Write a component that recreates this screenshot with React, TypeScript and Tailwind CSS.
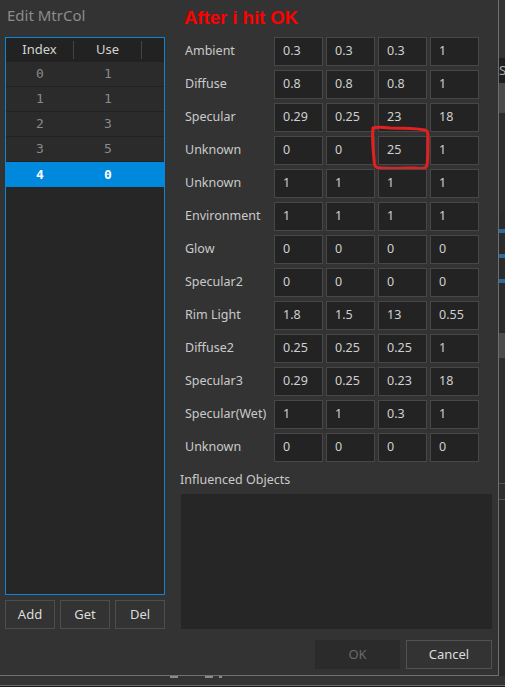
import React from 'react';

const ui = { fontFamily: '"Noto Sans", "Open Sans", sans-serif' };
const mono = { fontFamily: '"DejaVu Sans Mono", "Liberation Mono", monospace' };

const materialRows: [string, string[]][] = [
  ['Ambient', ['0.3', '0.3', '0.3', '1']],
  ['Diffuse', ['0.8', '0.8', '0.8', '1']],
  ['Specular', ['0.29', '0.25', '23', '18']],
  ['Unknown', ['0', '0', '25', '1']],
  ['Unknown', ['1', '1', '1', '1']],
  ['Environment', ['1', '1', '1', '1']],
  ['Glow', ['0', '0', '0', '0']],
  ['Specular2', ['0', '0', '0', '0']],
  ['Rim Light', ['1.8', '1.5', '13', '0.55']],
  ['Diffuse2', ['0.25', '0.25', '0.25', '1']],
  ['Specular3', ['0.29', '0.25', '0.23', '18']],
  ['Specular(Wet)', ['1', '1', '0.3', '1']],
  ['Unknown', ['0', '0', '0', '0']],
];

const colorSlots = [
  { index: '0', use: '1' },
  { index: '1', use: '1' },
  { index: '2', use: '3' },
  { index: '3', use: '5' },
  { index: '4', use: '0' },
];

function SlotList() {
  return (
    <div className="flex h-[558px] w-[160px] flex-col border border-[#0a86d9] bg-[#262626]">
      <div className="flex h-[24px] shrink-0 items-center bg-[#222222] text-[13px] text-[#d4d4d4]" style={ui}>
        <div className="flex h-[18px] w-[68px] items-center justify-center border-r border-[#444]">Index</div>
        <div className="flex h-[18px] w-[68px] items-center justify-center border-r border-[#444]">Use</div>
      </div>
      {colorSlots.map((s, i) => {
        const sel = i === colorSlots.length - 1;
        return (
          <div
            key={s.index}
            className={`flex h-[25px] shrink-0 items-center text-[13px] ${
              sel ? 'bg-[#0088dd] font-bold text-white' : 'border-b border-[#222] bg-[#2b2b2b] text-[#8a8a8a]'
            }`}
            style={mono}
          >
            <span className="w-[68px] text-center">{s.index}</span>
            <span className="w-[68px] text-center">{s.use}</span>
          </div>
        );
      })}
    </div>
  );
}

function ValueRow({ label, values, mark }: { label: string; values: string[]; mark?: boolean }) {
  return (
    <div className="flex h-[29px] items-center">
      <div className="w-[94px] pl-[5px] text-[12.5px] text-[#cacaca]">{label}</div>
      <div className="flex gap-[3px]">
        {values.map((v, i) => (
          <div
            key={i}
            className="relative flex h-[29px] w-[49px] items-center border border-[#474747] bg-[#232323] pl-[8px] text-[12.5px] text-[#d0d0d0]"
          >
            {v}
            {mark && i === 2 && (
              <svg className="absolute left-[-9px] top-[-12px]" width="62" height="47" viewBox="0 0 62 47" fill="none">
                <path
                  d="M3 3 C6 2 12 2 20 3 C32 3 44 3 55 5 C58 6 58 8 58 12 C58 22 58 32 57 40 C56 44 52 44 45 43 C34 43 20 44 10 43 C5 43 4 40 4 34 C3 24 2 12 3 3"
                  stroke="#e32020"
                  strokeWidth="3"
                  strokeLinecap="round"
                  strokeLinejoin="round"
                />
              </svg>
            )}
          </div>
        ))}
      </div>
    </div>
  );
}

function EdgeStrip() {
  // slice of the editor window that peeks out behind the dialog
  return (
    <div className="flex w-[6px] flex-col bg-[#333]">
      <div className="h-[58px]" />
      <div className="h-[25px] bg-[#1f1f1f] text-[13px] leading-[25px] text-[#aaa]" style={ui}>S</div>
      <div className="h-[30px] bg-[#4a4a4a]" />
      <div className="h-[100px] bg-[#2c2c2c]" />
      <div className="flex h-[120px] flex-col bg-[#2a2a2a]">
        <div className="mt-[16px] h-[4px] bg-[#2a6aa0]" />
        <div className="mt-[21px] h-[4px] bg-[#2a6aa0]" />
        <div className="mt-[21px] h-[4px] bg-[#2a6aa0]" />
      </div>
      <div className="h-[25px] bg-[#4b4b4b]" />
      <div className="h-[126px] border-b border-[#555] bg-[#2e2e2e]" />
      <div className="h-[16px] border-b border-[#555] bg-[#2e2e2e]" />
      <div className="flex-1 bg-[#2a2a2a]" />
    </div>
  );
}

export default function App() {
  return (
    <div className="flex h-[687px] w-[505px] flex-col overflow-hidden bg-[#333333]" style={ui}>
      <div className="flex h-[676px]">
        <div className="flex w-[499px] flex-col border-b border-r border-[#6f6f6f] bg-[#333333]">
          <div className="flex h-[37px] shrink-0">
            <div className="w-[184px] pl-[7px] pt-[4px] text-[15px] text-[#8c8c8c]">Edit MtrCol</div>
            <div
              className="pt-[5px] text-[18.5px] font-bold leading-[26px] text-[#ff0000]"
              style={{ fontFamily: '"Liberation Sans", Arial, sans-serif' }}
            >
              After i hit OK
            </div>
          </div>
          <div className="flex">
            <div className="ml-[5px] flex w-[160px] flex-col gap-[5px]">
              <SlotList />
              <div className="flex gap-[5px]">
                {['Add', 'Get', 'Del'].map((b) => (
                  <button
                    key={b}
                    className="h-[29px] w-[50px] border border-[#4d4d4d] bg-[#333] text-[13px] text-[#dcdcdc]"
                  >
                    {b}
                  </button>
                ))}
              </div>
            </div>
            <div className="ml-[15px] flex w-[312px] flex-col">
              <div className="flex flex-col gap-[4px]">
                {materialRows.map(([label, values], i) => (
                  <ValueRow key={i} label={label} values={values} mark={i === 3} />
                ))}
              </div>
              <div className="mt-[9px] h-[23px] text-[12.5px] text-[#cacaca]">Influenced Objects</div>
              <div className="ml-[1px] h-[135px] w-[311px] bg-[#262626]" />
              <div className="mt-[11px] flex justify-end gap-[6px]">
                <button className="h-[29px] w-[85px] bg-[#2b2b2b] text-[13px] text-[#6a6a6a]">OK</button>
                <button className="h-[29px] w-[86px] border border-[#525252] bg-[#333] text-[13px] text-[#dcdcdc]">
                  Cancel
                </button>
              </div>
            </div>
          </div>
        </div>
        <EdgeStrip />
      </div>
      <div className="flex h-[11px] flex-col">
        <div className="flex h-[9px] items-start">
          <div className="ml-[170px] h-[2px] w-[8px] bg-[#8a8a8a]" />
          <div className="ml-[27px] h-[2px] w-[8px] bg-[#8a8a8a]" />
          <div className="ml-[6px] h-[2px] w-[3px] bg-[#8a8a8a]" />
        </div>
        <div className="h-[1px] bg-[#6a6a6a]" />
        <div className="flex-1 bg-[#1a1a1a]" />
      </div>
    </div>
  );
}
